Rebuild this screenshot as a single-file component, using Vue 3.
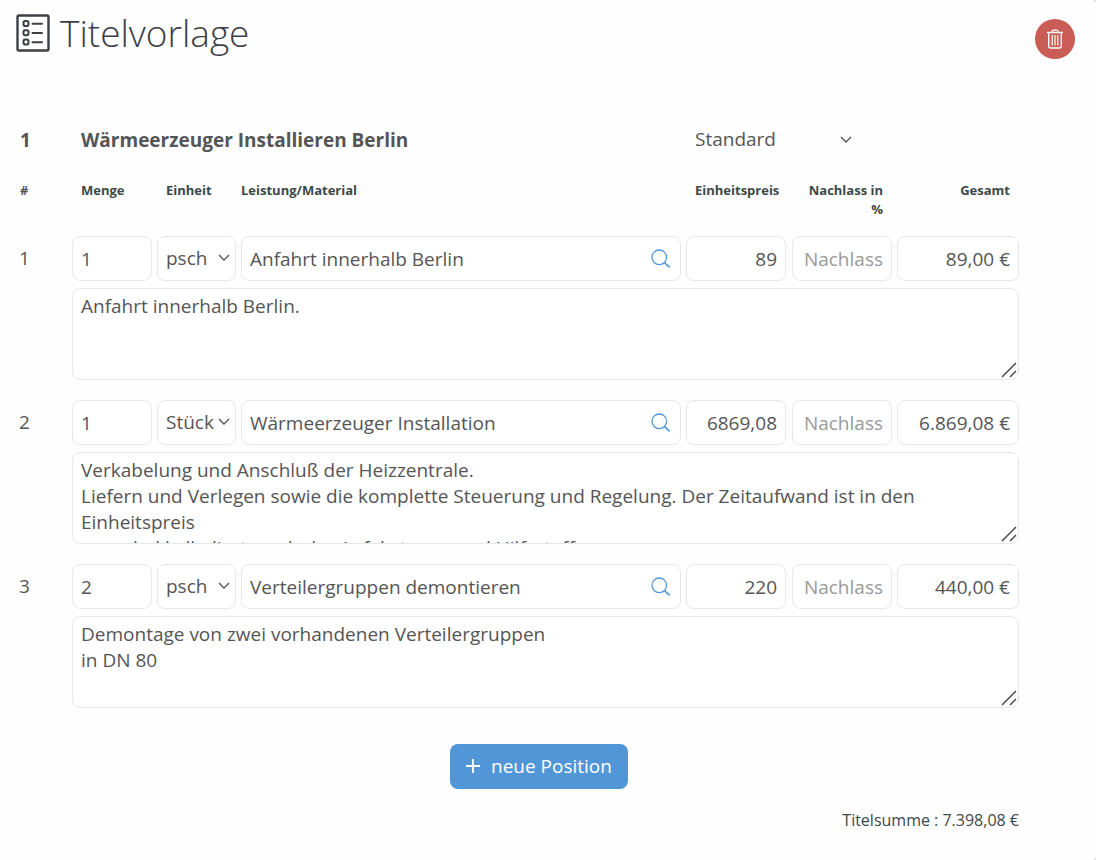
<script setup>
import { computed, reactive, ref } from 'vue'

const title = ref('Wärmeerzeuger Installieren Berlin')
const kind = ref('Standard')

const positions = reactive([
  {
    qty: '1',
    unit: 'psch',
    name: 'Anfahrt innerhalb Berlin',
    price: '89',
    discount: '',
    text: 'Anfahrt innerhalb Berlin.'
  },
  {
    qty: '1',
    unit: 'Stück',
    name: 'Wärmeerzeuger Installation',
    price: '6869,08',
    discount: '',
    text:
      'Verkabelung und Anschluß der Heizzentrale.\n' +
      'Liefern und Verlegen sowie die komplette Steuerung und Regelung. Der Zeitaufwand ist in den Einheitspreis\n' +
      'pauschal kalkuliert, auch der Anfahrtsweg und Hilfsstoffe.'
  },
  {
    qty: '2',
    unit: 'psch',
    name: 'Verteilergruppen demontieren',
    price: '220',
    discount: '',
    text: 'Demontage von zwei vorhandenen Verteilergruppen\nin DN 80'
  }
])

const number = (s) => parseFloat(String(s).replace(',', '.')) || 0
const total = (p) => number(p.qty) * number(p.price) * (1 - number(p.discount) / 100)
const euro = (n) =>
  n.toFixed(2).replace('.', ',').replace(/\B(?=(\d{3})+(?=,))/g, '.') + ' €'
const sum = computed(() => positions.reduce((s, p) => s + total(p), 0))

function addPosition() {
  positions.push({ qty: '1', unit: 'psch', name: '', price: '', discount: '', text: '' })
}
</script>

<template>
  <main class="page">
    <header class="top">
      <svg class="logo" viewBox="0 0 34 38" aria-hidden="true">
        <rect x="1.5" y="1.5" width="31" height="35" rx="1.5" stroke-width="2.4" />
        <g stroke-width="2">
          <rect x="7.5" y="7" width="5" height="5" rx="1.8" />
          <rect x="7.5" y="16.3" width="5" height="5" rx="1.8" />
          <rect x="7.5" y="25.6" width="5" height="5" rx="1.8" />
          <path d="M16.500 9.700h9.500M16.500 19h9.500M16.500 28.300h9.500" stroke-linecap="round" />
        </g>
      </svg>
      <h1>Titelvorlage</h1>
      <button class="delete" type="button" aria-label="Titelvorlage löschen">
        <svg viewBox="0 0 18 20" aria-hidden="true">
          <path d="M1 3.500h16" stroke-width="1.500" />
          <path d="M6 3.500V2.800Q6 1.200 7.300 1.200h3.400Q12 1.200 12 2.800V3.500" stroke-width="1.200" />
          <path d="M2.700 3.500v14Q2.700 19 4.200 19h9.600Q15.300 19 15.300 17.500v-14" stroke-width="1.300" />
          <path d="M6.200 6v10.500M9 6v10.500M11.800 6v10.500" stroke-width="1.200" />
        </svg>
      </button>
    </header>

    <section class="title-row">
      <span class="num">1</span>
      <input v-model="title" class="title-input" type="text" aria-label="Titel" />
      <div class="select kind">
        <select v-model="kind" aria-label="Art">
          <option>Standard</option>
          <option>Optional</option>
        </select>
        <svg viewBox="0 0 12 8" aria-hidden="true"><path d="M1 1l5 5 5-5" /></svg>
      </div>
    </section>

    <table class="positions">
      <colgroup>
        <col class="c-num" />
        <col class="c-qty" />
        <col class="c-unit" />
        <col />
        <col class="c-price" />
        <col class="c-disc" />
        <col class="c-total" />
      </colgroup>
      <thead>
        <tr>
          <th class="hash" scope="col">#</th>
          <th class="inset" scope="col">Menge</th>
          <th class="inset" scope="col">Einheit</th>
          <th scope="col">Leistung/Material</th>
          <th class="inset" scope="col">Einheitspreis</th>
          <th class="right discount" scope="col">Nachlass in %</th>
          <th class="right total" scope="col">Gesamt</th>
        </tr>
      </thead>
      <tbody v-for="(p, i) in positions" :key="i">
        <tr>
          <td class="num">{{ i + 1 }}</td>
          <td><input v-model="p.qty" class="field" type="text" aria-label="Menge" /></td>
          <td>
            <div class="select unit">
              <select v-model="p.unit" class="field" aria-label="Einheit">
                <option>psch</option>
                <option>Stück</option>
              </select>
              <svg viewBox="0 0 12 8" aria-hidden="true"><path d="M1 1l5 5 5-5" /></svg>
            </div>
          </td>
          <td>
            <div class="field search">
              <input v-model="p.name" type="text" aria-label="Leistung/Material" />
              <button type="button" aria-label="Suchen">
                <svg viewBox="0 0 20 20" aria-hidden="true">
                  <circle cx="8.300" cy="8.300" r="7.300" />
                  <path d="M13.600 13.600l5 4.800" stroke-width="1.600" />
                </svg>
              </button>
            </div>
          </td>
          <td class="price">
            <input v-model="p.price" class="field right" type="text" aria-label="Einheitspreis" />
          </td>
          <td>
            <input v-model="p.discount" class="field right" type="text" placeholder="Nachlass" aria-label="Nachlass in %" />
          </td>
          <td class="last">
            <input class="field right" type="text" readonly :value="euro(total(p))" aria-label="Gesamt" />
          </td>
        </tr>
        <tr>
          <td></td>
          <td class="last" colspan="6">
            <div class="memo">
              <textarea v-model="p.text" class="field" aria-label="Beschreibung"></textarea>
              <svg viewBox="0 0 16 16" aria-hidden="true"><path d="M1 15L15 1M9 15l6-6" /></svg>
            </div>
          </td>
        </tr>
      </tbody>
    </table>

    <div class="actions">
      <button class="add" type="button" @click="addPosition">
        <svg viewBox="0 0 14 14" aria-hidden="true"><path d="M7 0v14M0 7h14" /></svg>
        neue Position
      </button>
    </div>
    <p class="sum">Titelsumme : {{ euro(sum) }}</p>
  </main>
</template>

<style>
body {
  background: #d8d8d8;
}
</style>

<style scoped>
.page {
  box-sizing: border-box;
  min-height: 100vh;
  padding: 12px 77px 20px 0;
  border-radius: 0 4px 4px 0;
  background: #fefefe;
  color: #555;
  font: 19px/26px "Open Sans", sans-serif;
}

input,
select,
textarea,
button {
  box-sizing: border-box;
  margin: 0;
  border: 0;
  background: none;
  color: inherit;
  font: inherit;
  outline: none;
}

svg {
  display: block;
  fill: none;
  stroke: currentColor;
}

.top {
  display: flex;
  align-items: flex-start;
  gap: 10px;
  height: 100px;
  margin-right: -56px;
  padding-left: 16px;
  color: #3b4046;
}

.logo {
  width: 34px;
  height: 38px;
  margin-top: 2px;
}

h1 {
  flex: 1;
  margin: 0;
  font-size: 37px;
  line-height: 42px;
  font-weight: 300;
}

.delete {
  display: grid;
  place-items: center;
  width: 40px;
  height: 40px;
  margin-top: 7px;
  padding: 0;
  border-radius: 50%;
  background: #c95c54;
  color: #fff;
}

.delete svg {
  width: 18px;
  height: 20px;
}

.title-row {
  display: flex;
  align-items: center;
  height: 56px;
}

.title-row .num {
  width: 72px;
  box-sizing: border-box;
  font-weight: 700;
}

.num {
  padding-left: 20px;
}

.title-input {
  flex: 1;
  min-width: 0;
  height: 44px;
  padding: 0 9px;
  font-weight: 700;
}

.select {
  position: relative;
}

.select select {
  width: 100%;
  height: 44px;
  appearance: none;
}

.select svg {
  position: absolute;
  top: 18px;
  right: 6px;
  width: 12px;
  height: 8px;
  stroke-width: 1.4;
  pointer-events: none;
}

.kind {
  width: 163px;
  margin-right: 161px;
}

.kind select {
  padding: 0 0 2px;
}

.positions {
  width: 100%;
  table-layout: fixed;
  border-collapse: collapse;
}

.c-num {
  width: 72px;
}

.c-qty {
  width: 85px;
}

.c-unit {
  width: 84px;
}

.c-price {
  width: 106px;
}

.c-disc {
  width: 105px;
}

.c-total {
  width: 122px;
}

th {
  height: 68px;
  padding: 13px 0 0;
  box-sizing: border-box;
  color: #3b4948;
  font-size: 13px;
  line-height: 19px;
  font-weight: 700;
  text-align: left;
  vertical-align: top;
}

th.inset {
  padding-left: 9px;
}

th.hash {
  padding-left: 20px;
  color: #555;
}

th.discount {
  padding-right: 14px;
  padding-left: 9px;
}

th.total {
  padding-right: 9px;
}

td {
  padding: 0 5px 0 0;
}

td.num {
  padding-bottom: 2px;
  padding-left: 19px;
}

td.price {
  padding-right: 6px;
}

td.last {
  padding-right: 0;
}

.field {
  display: block;
  width: 100%;
  height: 45px;
  padding: 0 8px;
  border: 1px solid #e6e7e8;
  border-radius: 8px;
  background: #fff;
}

th.right,
input.right {
  text-align: right;
}

input::placeholder {
  color: #999;
  opacity: 1;
}

.unit select {
  height: 45px;
  padding: 0 8px 2px;
}

.search {
  box-sizing: border-box;
  display: flex;
  align-items: center;
  padding: 0 9px 0 8px;
}

.search input {
  flex: 1;
  min-width: 0;
  padding: 0;
}

.search button {
  padding: 0;
  color: #4f95d8;
}

.search svg {
  width: 20px;
  height: 20px;
  stroke-width: 1.3;
}

.memo {
  position: relative;
  padding: 7px 0 20px;
}

.memo textarea {
  height: 92px;
  padding: 4px 8px;
  line-height: 26px;
  resize: none;
  overflow: hidden;
}

.memo svg {
  position: absolute;
  right: 2px;
  bottom: 22px;
  width: 16px;
  height: 16px;
  stroke: #4a4a4a;
  stroke-width: 1.5;
  pointer-events: none;
}

.actions {
  display: flex;
  justify-content: center;
  padding: 16px 0 18px 59px;
}

.add {
  display: flex;
  align-items: center;
  gap: 11px;
  height: 45px;
  padding: 0 16px 1px;
  border-radius: 8px;
  background: #5196d6;
  color: #fff;
}

.add svg {
  width: 14px;
  height: 14px;
  stroke-width: 1.8;
}

.sum {
  margin: 0;
  color: #3b4948;
  font-size: 16px;
  text-align: right;
}
</style>
